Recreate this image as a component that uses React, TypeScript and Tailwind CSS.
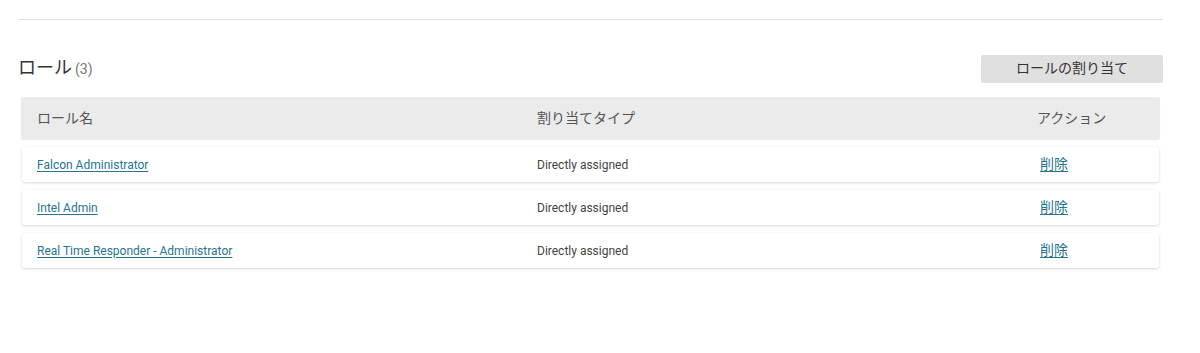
import React from 'react'

type RoleRow = {
  name: string
  type: string
}

const roles: RoleRow[] = [
  { name: 'Falcon Administrator', type: 'Directly assigned' },
  { name: 'Intel Admin', type: 'Directly assigned' },
  { name: 'Real Time Responder - Administrator', type: 'Directly assigned' },
]

const font = {
  fontFamily: 'Roboto, "Noto Sans CJK JP", sans-serif',
}

export default function App() {
  return (
    <div
      className="w-[1200px] h-[353px] bg-white px-[18px] pt-[19px]"
      style={font}
    >
      <div className="w-[1145px] border-t border-[#e0e0e0]">
        <div className="flex items-center justify-between pt-[34px]">
          <h2 className="flex items-baseline text-[18px] leading-[28px] text-[#333]">
            ロール
            <span className="ml-[3px] text-[14px] text-[#777]">(3)</span>
          </h2>
          <button className="h-[28px] w-[182px] rounded-[2px] bg-[#e0e0e0] text-[14px] text-[#333]">
            ロールの割り当て
          </button>
        </div>

        <div className="mt-[14px] px-[3px]">
          <div className="grid h-[42px] grid-cols-[501px_500px_1fr] items-center rounded-[2px] bg-[#ebebeb] text-[14px] text-[#555] shadow-[0_1px_1px_rgba(0,0,0,0.08)]">
            <div className="pl-[16px]">ロール名</div>
            <div className="pl-[15px]">割り当てタイプ</div>
            <div className="pl-[15px]">アクション</div>
          </div>

          <div className="mt-[8px] flex flex-col gap-[8px] px-px">
            {roles.map((role) => (
              <div
                key={role.name}
                className="grid h-[35px] grid-cols-[500px_500px_1fr] items-center rounded-[3px] bg-white text-[12px] shadow-[0_1px_3px_rgba(0,0,0,0.16)]"
              >
                <div className="pl-[15px]">
                  <a href="#" className="text-[#26758f] underline underline-offset-2">
                    {role.name}
                  </a>
                </div>
                <div className="pl-[15px] text-[#444]">{role.type}</div>
                <div className="pl-[18px]">
                  <a href="#" className="text-[14px] text-[#26758f] underline underline-offset-2">
                    削除
                  </a>
                </div>
              </div>
            ))}
          </div>
        </div>
      </div>
    </div>
  )
}
